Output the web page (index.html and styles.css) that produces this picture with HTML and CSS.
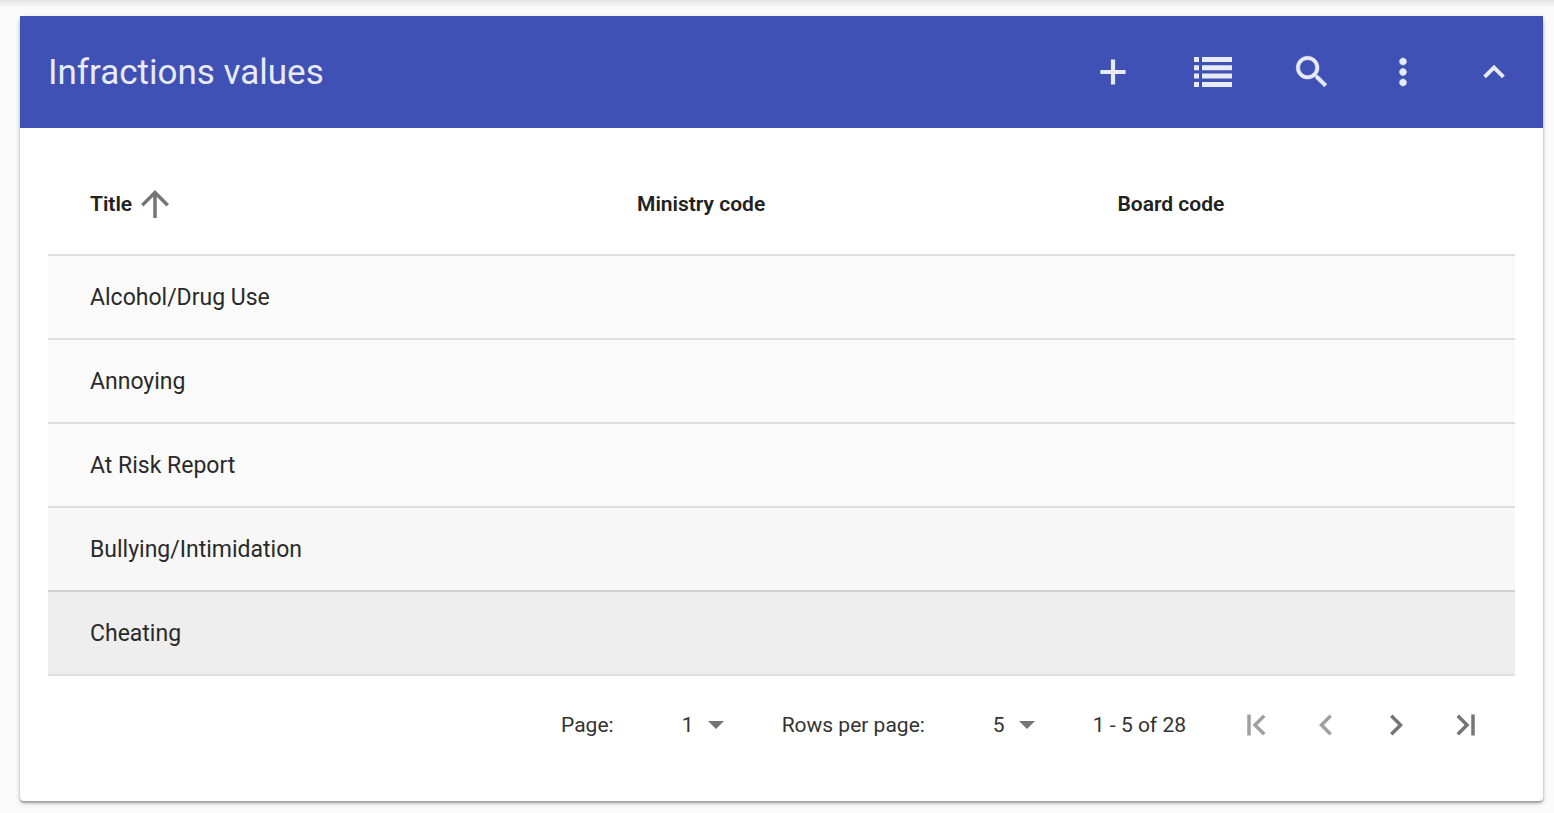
FILE: index.html
```html
<!DOCTYPE html>
<html lang="en">
<head>
<meta charset="utf-8">
<title>Infractions values</title>
<link rel="stylesheet" href="styles.css">
</head>
<body>
<main class="page">
  <section class="card">
    <header class="toolbar">
      <h1 class="toolbar-title">Infractions values</h1>
      <div class="toolbar-actions">
        <button class="icon-button" type="button" aria-label="Add"><svg class="icon" viewBox="0 0 24 24"><path d="M19.2 13.2h-6v6h-2.4v-6h-6v-2.4h6v-6h2.4v6h6v2.4z"/></svg></button>
        <button class="icon-button icon-button-wide" type="button" aria-label="List"><svg class="icon-list" viewBox="0 0 38 30"><path d="M0 0h5v5H0zM8 0h30v5H8zM0 8.3h5v5H0zM8 8.3h30v5H8zM0 16.6h5v5H0zM8 16.6h30v5H8zM0 25h5v5H0zM8 25h30v5H8z"/></svg></button>
        <button class="icon-button" type="button" aria-label="Search"><svg class="icon icon-heavy" viewBox="0 0 24 24"><path d="M15.5 14h-.79l-.28-.27C15.41 12.59 16 11.11 16 9.5 16 5.91 13.09 3 9.5 3S3 5.91 3 9.5 5.91 16 9.5 16c1.61 0 3.09-.59 4.23-1.57l.27.28v.79l5 4.99L20.49 19l-4.99-5zm-6 0C7.01 14 5 11.99 5 9.5S7.01 5 9.5 5 14 7.01 14 9.5 11.99 14 9.5 14z"/></svg></button>
        <button class="icon-button" type="button" aria-label="More"><svg class="icon icon-heavy" viewBox="0 0 24 24"><path d="M12 8c1.1 0 2-.9 2-2s-.9-2-2-2-2 .9-2 2 .9 2 2 2zm0 2c-1.1 0-2 .9-2 2s.9 2 2 2 2-.9 2-2-.9-2-2-2zm0 6c-1.1 0-2 .9-2 2s.9 2 2 2 2-.9 2-2-.9-2-2-2z"/></svg></button>
        <button class="icon-button" type="button" aria-label="Collapse"><svg class="icon icon-heavy" viewBox="0 0 24 24"><path d="M12 8l-6 6 1.41 1.41L12 10.83l4.59 4.58L18 14z"/></svg></button>
      </div>
    </header>
    <div class="content">
      <table class="data-table">
        <thead>
          <tr>
            <th class="col-title" scope="col" aria-sort="ascending"><span class="sort">Title<svg class="sort-icon" viewBox="0 0 24 24"><path d="M4 12l1.41 1.41L11 7.83V20h2V7.83l5.58 5.59L20 12l-8-8-8 8z"/></svg></span></th>
            <th class="col-ministry" scope="col">Ministry code</th>
            <th scope="col">Board code</th>
          </tr>
        </thead>
        <tbody>
          <tr><td>Alcohol/Drug Use</td><td></td><td></td></tr>
          <tr><td>Annoying</td><td></td><td></td></tr>
          <tr><td>At Risk Report</td><td></td><td></td></tr>
          <tr class="row-tinted"><td>Bullying/Intimidation</td><td></td><td></td></tr>
          <tr class="row-hover"><td>Cheating</td><td></td><td></td></tr>
        </tbody>
      </table>
      <nav class="pagination" aria-label="Pagination">
        <div class="page-field">
          <label for="page">Page:</label>
          <span class="select-wrap"><select class="select" id="page"><option>1</option><option>2</option><option>3</option><option>4</option><option>5</option><option>6</option></select><svg class="select-arrow" viewBox="0 0 16 8"><path d="M0 0h16L8 8z"/></svg></span>
        </div>
        <div class="page-field">
          <label for="rows">Rows per page:</label>
          <span class="select-wrap"><select class="select" id="rows"><option>5</option><option>10</option><option>15</option></select><svg class="select-arrow" viewBox="0 0 16 8"><path d="M0 0h16L8 8z"/></svg></span>
        </div>
        <span class="range">1 - 5 of 28</span>
        <div class="page-buttons">
          <button class="icon-button" type="button" aria-label="First page" disabled><svg class="icon" viewBox="0 0 24 24"><path d="M7 6v12h2V6H7zM17.41 7.41L16 6l-6 6 6 6 1.41-1.41L12.83 12z"/></svg></button>
          <button class="icon-button" type="button" aria-label="Previous page" disabled><svg class="icon" viewBox="0 0 24 24"><path d="M15.41 7.41L14 6l-6 6 6 6 1.41-1.41L10.83 12z"/></svg></button>
          <button class="icon-button" type="button" aria-label="Next page"><svg class="icon" viewBox="0 0 24 24"><path d="M10 6L8.59 7.41 13.17 12l-4.58 4.59L10 18l6-6z"/></svg></button>
          <button class="icon-button" type="button" aria-label="Last page"><svg class="icon" viewBox="0 0 24 24"><path d="M15 6v12h2V6h-2zM8 6L6.59 7.41 11.17 12l-4.58 4.59L8 18l6-6z"/></svg></button>
        </div>
      </nav>
    </div>
  </section>
</main>
</body>
</html>
```
FILE: styles.css
```css
* {
  box-sizing: border-box;
}

body {
  margin: 0;
  background: #fafafa;
  color: #2a2a2a;
  font-family: Roboto, "Liberation Sans", sans-serif;
}

.page {
  padding: 16px 11px 12px 20px;
  background: linear-gradient(#e4e4e4, #fafafa 8px);
}

.card {
  background: #fff;
  border-radius: 4px;
  box-shadow: 0 2px 5px rgba(0, 0, 0, 0.2), 0 2px 2px rgba(0, 0, 0, 0.26);
}

.toolbar {
  display: flex;
  align-items: center;
  justify-content: space-between;
  height: 112px;
  padding: 0 14px 0 28px;
  background: #3f51b5;
  color: #e8eaf6;
}

.toolbar-title {
  margin: 0;
  font-size: 35px;
  font-weight: 400;
}

.toolbar-actions {
  display: flex;
  gap: 21px;
}

.icon-button {
  display: flex;
  align-items: center;
  justify-content: center;
  width: 70px;
  height: 70px;
  padding: 0;
  border: 0;
  background: none;
  color: inherit;
}

.icon-button-wide {
  width: 87px;
}

.icon {
  width: 42px;
  height: 42px;
  fill: currentColor;
}

.icon-heavy {
  stroke: currentColor;
  stroke-width: 0.3;
}

.icon-list {
  width: 38px;
  height: 30px;
  fill: currentColor;
}

.content {
  padding: 28px;
}

.data-table {
  width: 100%;
  table-layout: fixed;
  border-spacing: 0;
}

.data-table th,
.data-table td {
  padding: 0;
  text-align: left;
}

.data-table th {
  height: 98px;
  padding-bottom: 2px;
  color: #212121;
  font-size: 21px;
  font-weight: 600;
}

.data-table th:first-child,
.data-table td:first-child {
  padding-left: 42px;
}

.data-table td {
  height: 84px;
  border-top: 2px solid #dedede;
  background: #fafafa;
  font-size: 23px;
}

.data-table .row-tinted td {
  background: #f7f7f7;
}

.data-table .row-hover td {
  height: 86px;
  border-top-color: #d0d0d0;
  border-bottom: 2px solid #e0e0e0;
  background: #eee;
}

.col-title {
  width: 40.15%;
}

.col-ministry {
  width: 32.75%;
}

.sort {
  display: flex;
  align-items: center;
  gap: 2px;
}

.sort-icon {
  width: 42px;
  height: 42px;
  fill: #757575;
}

.pagination {
  display: flex;
  align-items: center;
  justify-content: flex-end;
  height: 97px;
  padding-right: 14px;
  font-size: 21px;
  color: #333;
}

.page-field {
  display: flex;
  align-items: center;
  gap: 68px;
  margin-right: 58px;
}

.select-wrap {
  display: grid;
  align-items: center;
  width: 42px;
}

.select {
  grid-area: 1 / 1;
  height: 42px;
  padding: 0;
  border: 0;
  appearance: none;
  background: none;
  color: inherit;
  font: inherit;
}

.select-arrow {
  grid-area: 1 / 1;
  justify-self: end;
  width: 16px;
  height: 8px;
  fill: #757575;
  pointer-events: none;
}

.page-buttons {
  display: flex;
  margin-left: 35px;
  color: #757575;
}

.icon-button:disabled {
  color: #a0a0a0;
}
```
